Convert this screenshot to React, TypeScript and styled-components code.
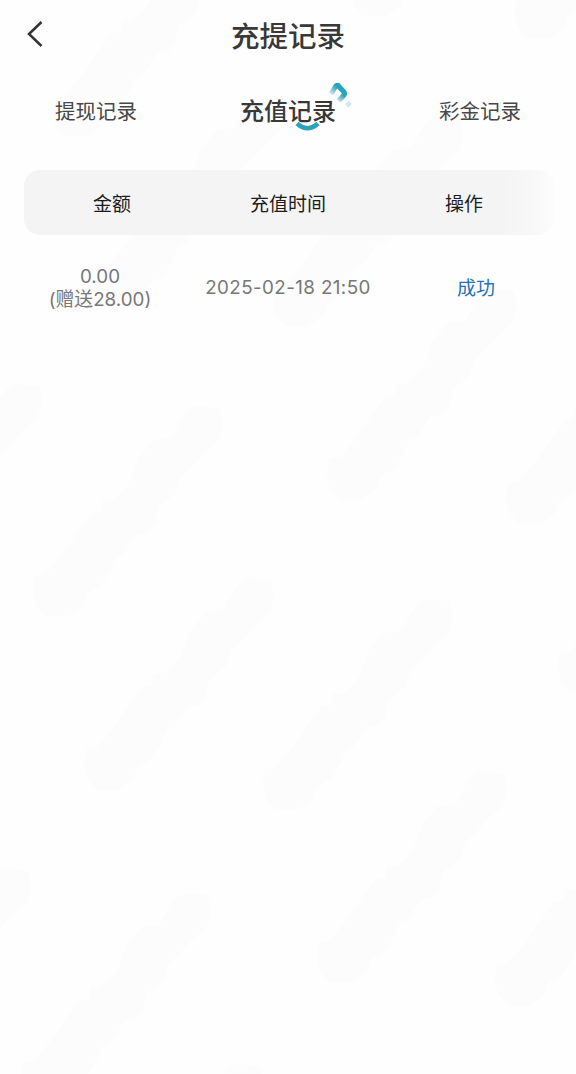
import styled, {createGlobalStyle} from "styled-components";

interface IRecord {
    amount: string;
    bonus: string;
    time: string;
    status: string;
}

const tabs = ["提现记录", "充值记录", "彩金记录"];
const columns = ["金额", "充值时间", "操作"];

const records: IRecord[] = [
    {amount: "0.00", bonus: "(赠送28.00)", time: "2025-02-18 21:50", status: "成功"},
];

const streaks = [
    [52, -75], [350, -195], [514, -173], [95, 95], [272, 115],
    [326, 288], [505, 312], [-149, 383], [32, 405], [83, 578],
    [262, 598], [557, 481], [316, 771], [494, 794], [-160, 867],
    [20, 892], [72, 1063],
];

const streakPath = "M495 2L563 10L575 55L560 105L515 145L480 185L447 215L430 265L400 290L380 305L370 355L345 383L315 385L295 415L275 447L250 457L235 495L205 545L165 565L150 605L105 635H40L10 600L2 555L10 513L40 510L95 445L135 385L180 325L207 320L211 287H240L275 260L297 225L320 160L365 105L420 98L445 50L470 15Z";

export default function App() {
    return <Page>
        <GlobalStyle/>
        <Backdrop viewBox="0 0 576 1074" aria-hidden="true">
            {streaks.map(([x, y]) => (
                <path key={`${x},${y}`} d={streakPath} transform={`translate(${x} ${y}) scale(.333)`}/>
            ))}
        </Backdrop>
        <Content>
            <Header>
                <BackButton aria-label="返回">
                    <svg width="18" height="28" viewBox="0 0 18 28">
                        <path d="M15.5 2L3 14L15.5 26" fill="none" stroke="#333" strokeWidth="2.5"/>
                    </svg>
                </BackButton>
                <Title>充提记录</Title>
            </Header>
            <Tabs>
                {tabs.map((tab, i) => (
                    <Tab key={tab} $active={i === 1}>
                        {tab}
                        {i === 1 && <ActiveMark/>}
                    </Tab>
                ))}
            </Tabs>
            <TableHead>
                {columns.map(column => <span key={column}>{column}</span>)}
            </TableHead>
            {records.map(record => (
                <Row key={record.time}>
                    <Amount>
                        <span>{record.amount}</span>
                        <span>{record.bonus}</span>
                    </Amount>
                    <Time>{record.time}</Time>
                    <Status>{record.status}</Status>
                </Row>
            ))}
        </Content>
    </Page>
}

function ActiveMark() {
    return <Mark viewBox="0 0 60 52">
        <defs>
            <linearGradient id="roof" gradientUnits="userSpaceOnUse" x1="35" y1="13" x2="42" y2="5">
                <stop offset="0" stopColor="#2ba3b8" stopOpacity="0.1"/>
                <stop offset="1" stopColor="#2ba3b8"/>
            </linearGradient>
            <linearGradient id="wall" gradientUnits="userSpaceOnUse" x1="48" y1="13" x2="43" y2="20">
                <stop offset="0" stopColor="#2ba3b8"/>
                <stop offset="1" stopColor="#2ba3b8" stopOpacity="0.15"/>
            </linearGradient>
        </defs>
        <path d="M36 12L40.5 4.5Q42 2.5 44 4" fill="none" stroke="url(#roof)" strokeWidth="5"/>
        <path d="M42.5 3L49 10Q50.2 11.5 49 13L43.5 19" fill="none" stroke="url(#wall)" strokeWidth="5"/>
        <path d="M53.5 18.5L57 22L53.5 25.5L50 22Z" fill="#cfe9ef"/>
        <path d="M2 41.5Q12.5 51 23 41.5" fill="none" stroke="#2ba3b8" strokeWidth="4.5"/>
    </Mark>
}

const GlobalStyle = createGlobalStyle`
  body {
    margin: 0;
    background: #fefefe;
    font-family: Inter, "Noto Sans CJK SC", sans-serif;
  }
`

const Page = styled.div`
  position: relative;
  height: 1074px;
  overflow: hidden;
`

const Backdrop = styled.svg`
  position: absolute;
  inset: 0;
  width: 576px;
  height: 1074px;
  fill: #fcfcfc;
`

const Content = styled.div`
  position: relative;
  display: flex;
  flex-direction: column;
`

const Header = styled.header`
  display: grid;
  grid-template-columns: 60px 1fr 60px;
  align-items: center;
  height: 71px;
`

const BackButton = styled.button`
  display: flex;
  padding: 0 0 3px 26px;
  border: 0;
  background: none;
`

const Title = styled.h1`
  margin: 0;
  padding-top: 2px;
  font-size: 28.5px;
  font-weight: 500;
  line-height: 40px;
  text-align: center;
  color: #383838;
`

const Tabs = styled.nav`
  display: grid;
  grid-template-columns: repeat(3, 1fr);
  justify-items: center;
  align-items: center;
  height: 80px;
`

const Tab = styled.div<{ $active: boolean }>`
  position: relative;
  padding-top: ${({$active}) => $active ? "2px" : "1px"};
  font-size: ${({$active}) => $active ? "24px" : "20.5px"};
  font-weight: ${({$active}) => $active ? 500 : 400};
  line-height: 32px;
  color: ${({$active}) => $active ? "#383838" : "#484848"};
`

const Mark = styled.svg`
  position: absolute;
  left: 55px;
  top: -12px;
  width: 60px;
  height: 52px;
`

const TableHead = styled.div`
  display: grid;
  grid-template-columns: repeat(3, 1fr);
  align-items: center;
  justify-items: center;
  height: 65px;
  margin: 19px 22px 0 24px;
  padding: 0 2px 1px 0;
  box-sizing: border-box;
  border-radius: 16px;
  background: linear-gradient(90deg, #f4f4f4 90%, #f8f8f8 96%, #fcfcfc);
  font-size: 19px;
  color: #1c1c1c;
`

const Row = styled.div`
  display: grid;
  grid-template-columns: repeat(3, 1fr);
  align-items: center;
  justify-items: center;
  height: 106px;
  padding: 0 6px;
  font-size: 18.8px;
  color: #777;
`

const Amount = styled.div`
  display: flex;
  flex-direction: column;
  align-items: center;
  padding-top: 1px;
  line-height: 22.5px;
`

const Time = styled.span`
  padding-bottom: 1px;
  letter-spacing: 0.4px;
  white-space: nowrap;
`

const Status = styled.span`
  padding-bottom: 3px;
  font-size: 19px;
  color: #2372b9;
`
